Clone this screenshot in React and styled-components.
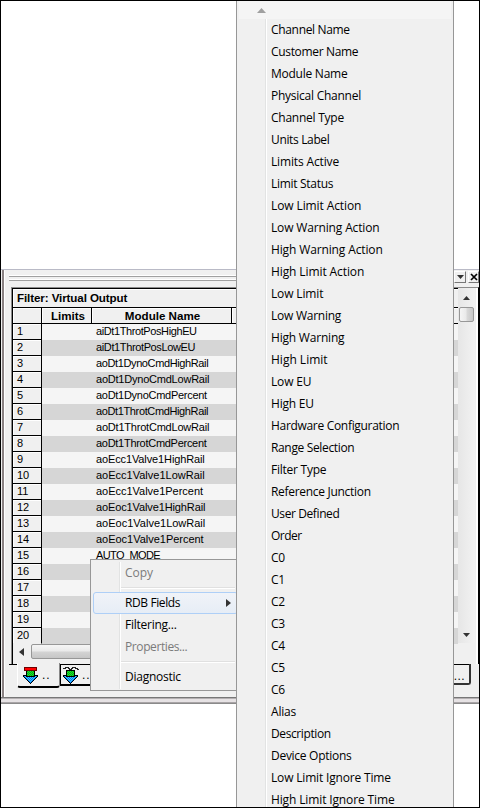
import React from "react";
import styled, { createGlobalStyle, css } from "styled-components";

const Global = createGlobalStyle`
  *{box-sizing:border-box}
  body{margin:0;background:#fff}
  svg{flex:none}
`;
const Frame = styled.div`
  position:relative;width:480px;height:808px;border:1px solid #000;background:#fff;overflow:hidden;
  padding-top:268px;font:12px/16px "Liberation Sans",Arial,sans-serif;color:#000;
`;
const Panel = styled.section`
  display:flex;height:428px;border-top:1px solid #b9bac6;background:#f0f0f0;
`;
const LeftEdge = styled.div`
  width:7px;margin-left:1px;border-left:2px solid #8a8283;box-shadow:inset 1px 0 #fff;
`;
const PanelBody = styled.div`flex:1;display:flex;flex-direction:column;`;
const TitleBar = styled.header`
  height:17px;flex:none;display:flex;justify-content:flex-end;align-items:flex-start;
`;
const Grip = styled.div`
  flex:1;height:6px;margin-top:5px;
  background:linear-gradient(#fff 0 1px,#a0a0a0 1px 2px,#f0f0f0 2px 4px,#fff 4px 5px,#a0a0a0 5px);
`;
const TitleButton = styled.button`
  width:${p => p.$width}px;height:12px;margin:1px 0 0 2px;padding:0;border:1px solid;
  border-color:#fff #777 #777 #fff;background:#f0f0f0;display:grid;place-items:center;
`;
const Well = styled.div`
  flex:none;height:377px;display:flex;margin-left:2px;border-top:1px solid #8b8b8b;border-left:1px solid #8b8b8b;border-right:1px solid #000;
`;
const Sheet = styled.div`
  width:446px;border-top:1px solid #000;border-left:1px solid #000;display:flex;flex-direction:column;
`;
const FilterTitle = styled.div`
  height:19px;flex:none;padding:1px 0 0 4px;font-size:11.6px;letter-spacing:-.1px;font-weight:bold;border-bottom:1px solid #000;box-shadow:inset 1px 1px #fff;
`;
const HeadRow = styled.div`
  display:grid;grid-template-columns:29px 50px 140px 1fr;height:16px;flex:none;border-bottom:1px solid #000;
`;
const HeadCell = styled.div`
  border-right:1px solid #000;text-align:center;font-size:11.6px;font-weight:bold;line-height:15px;box-shadow:inset 1px 1px #fff;
  padding-left:${p => p.$inset || 0}px;
  &:last-child{border-right:0}
`;
const Row = styled.div`
  display:flex;height:16px;flex:none;font-size:11px;background:${p => (p.$dark ? "#d6d6d6" : "#f5f5f5")};
`;
const RowNumber = styled.div`
  width:29px;padding-left:4px;border-right:1px solid #000;border-bottom:1px solid ${p => (p.$last ? "#f0f0f0" : "#000")};
  background:#f0f0f0;box-shadow:inset 1px 1px #fff;line-height:15px;
`;
const RowName = styled.div`padding-left:54px;line-height:15px;letter-spacing:${p => p.$track || 0}px;`;
const HScroll = styled.div`
  display:flex;height:16px;background:#f0f0f0;
`;
const ArrowCell = styled.div`
  width:17px;height:${p => p.$height || 17}px;flex:none;display:grid;place-items:center;
`;
const HThumb = styled.div`
  width:330px;height:15px;margin:0 1px;border:1px solid #979797;border-radius:2px;
  background:linear-gradient(#f5f5f5,#e9e9e9 48%,#d4d4d4 52%,#c6c6c6);
`;
const VScroll = styled.div`
  width:17px;height:355px;padding-top:1px;display:flex;flex-direction:column;align-items:center;background:linear-gradient(90deg,#e6e6e6,#f2f2f2);
`;
const VThumb = styled.div`
  width:15px;height:15px;border:1px solid #979797;border-radius:2px;margin-top:1px;
  background:linear-gradient(90deg,#f5f5f5,#e9e9e9 48%,#dadada 52%,#c6c6c6);
`;
const BottomArrow = styled(ArrowCell)`margin-top:auto;`;
const WellEdge = styled.div`flex:1;border-right:2px solid #fff;`;
const TabStrip = styled.div`
  height:33px;display:flex;align-items:flex-start;margin-right:8px;box-shadow:inset 0 1px #000,8px 0 #f0f0f0;
`;
const Tab = styled.div`
  display:flex;align-items:flex-start;gap:5px;font-weight:bold;line-height:13px;background:#f0f0f0;
  border-right:1px solid #000;border-bottom:2px solid #000;
  ${p => p.$active
    ? css`width:43px;height:25px;margin:-1px 0 0 8px;padding:3px 0 0 5px;border-right-color:#888;border-left:1px solid #fff;border-radius:0 0 3px 3px;`
    : css`width:42px;height:22px;padding:1px 0 0 2px;border-left:1px solid #000;border-top:1px solid #000;`}
`;
const TabDots = styled.span`margin:${p => p.$drop}px 0 0 -2px;font-weight:normal;letter-spacing:1px;`;
const LastTab = styled.div`
  margin-left:auto;width:40px;height:21px;border-right:2px solid #333;border-bottom:2px solid #333;
  border-radius:0 0 3px 0;padding:6px 4px 0 0;text-align:right;line-height:13px;letter-spacing:0.4px;
`;
const Splitter = styled.div`
  height:7px;border-top:1px solid #777;border-bottom:1px solid #8a8a8a;background:linear-gradient(#b4b0b2 1px,#e6e2e4 1px 4px,#a8a4a6 4px);
`;
const menuType = css`font:12px/22px "Open Sans","Noto Sans",sans-serif;`;
const ContextMenu = styled.nav`
  position:absolute;left:89px;top:558px;width:148px;height:132px;border:1px solid #979797;background:#f0f0f0;
  padding:2px;${menuType}
  background-image:linear-gradient(90deg,#e2e3e3 1px,#fff 1px);background-size:2px 127px;background-position:28px 2px;background-repeat:no-repeat;
`;
const MenuEntry = styled.div`
  height:22px;padding:0 3px 0 31px;border:1px solid transparent;border-radius:3px;line-height:20px;display:flex;justify-content:space-between;align-items:center;
  color:${p => (p.$disabled ? "#7b7b7b" : "#000")};letter-spacing:${p => p.$track || 0}px;
  ${p => p.$hover && css`border-color:#aecff7;background:linear-gradient(#f0f3f8,#e6edf6);margin-right:-3px;padding-right:6px;`}
`;
const Divider = styled.hr`margin:3px 0 3px 28px;height:2px;border:0;background:linear-gradient(#e0e0e0 1px,#fff 1px);`;
const FieldMenu = styled.nav`
  position:absolute;left:235px;top:0;width:218px;height:806px;border:solid #979797;border-width:0 1px;background:#f0f0f0;
  padding:0 2px;${menuType}
`;
const ScrollUp = styled.div`
  height:18px;background:#f5f5f5;display:flex;align-items:center;padding-left:18px;
`;
const FieldList = styled.div`border-left:1px solid #e2e3e3;margin-left:26px;box-shadow:inset 1px 0 #fff;`;
const Field = styled.div`height:22px;padding-left:5px;white-space:nowrap;letter-spacing:${p => p.$track || 0}px;`;

const Arrow = ({ dir, color = "#333" }) => {
  const d = { up: "M0 5L4.500 0L9 5z", down: "M0 0H9L4.500 5z", left: "M5 0V8L0 4z", right: "M0 0L5 4L0 8z" }[dir];
  const wide = dir === "up" || dir === "down";
  return <svg width={wide ? 9 : 5} height={wide ? 5 : 8}><path d={d} fill={color} /></svg>;
};
const SmallArrow = ({ dir }) => (
  <svg width="7" height="4"><path d={dir === "up" ? "M0 4L3.500 0L7 4z" : "M0 0H7L3.500 4z"} fill="#333" /></svg>
);
const OutputIcon = ({ wave }) => (
  <svg width="16" height="18" shapeRendering="crispEdges">
    <defs>
      <pattern id="blueDots" width="2" height="2" patternUnits="userSpaceOnUse"><path d="M0 0h2v2H0z" fill="#0078f0" /><path d="M0 0h1v1H0zM1 1h1v1H1z" fill="#40c8ff" /></pattern>
      <pattern id="greenDots" width="2" height="2" patternUnits="userSpaceOnUse"><path d="M0 0h2v2H0z" fill="#00a020" /><path d="M0 0h1v1H0zM1 1h1v1H1z" fill="#20e820" /></pattern>
    </defs>
    <path d="M0 9h15v2h-1v1h-1v1h-1v1h-1v1h-1v1h-1v1h-1v1h-1v-1h-1v-1h-1v-1h-1v-1h-1v-1h-1v-1h-1v-1h-1z" fill="#000" />
    <path d="M1 10h13v1h-1v1h-1v1h-1v1h-1v1h-1v1h-1v1h-1v-1h-1v-1h-1v-1h-1v-1h-1v-1h-1v-1h-1z" fill="url(#blueDots)" />
    <path d="M3 4h9v7h-9z" fill="#000" />
    <path d="M4 5h7v5h-7z" fill="url(#greenDots)" />
    {wave
      ? <path d="M0 2h2v-1h3v1h1v1h2v-1h1v-1h3v1h2v1h2" fill="none" stroke="#222" transform="translate(0 .5)" />
      : <path d="M1.500 1.500h12v3h-12z" fill="#ff0000" stroke="#700000" />}
  </svg>
);

const channels = [
  ["aiDt1ThrotPosHighEU", -0.4], ["aiDt1ThrotPosLowEU", -0.37], ["aoDt1DynoCmdHighRail", -0.38],
  ["aoDt1DynoCmdLowRail", -0.22], ["aoDt1DynoCmdPercent", -0.28], ["aoDt1ThrotCmdHighRail", -0.37],
  ["aoDt1ThrotCmdLowRail", -0.21], ["aoDt1ThrotCmdPercent", -0.28], ["aoEcc1Valve1HighRail", -0.12],
  ["aoEcc1Valve1LowRail", 0], ["aoEcc1Valve1Percent", -0.02], ["aoEoc1Valve1HighRail", -0.12],
  ["aoEoc1Valve1LowRail", 0], ["aoEoc1Valve1Percent", -0.02], ["AUTO_MODE", -0.6],
  [""], [""], [""], [""], [""],
];
const fields = [
  ["Channel Name", -0.33], ["Customer Name", -0.33], ["Module Name", -0.25], ["Physical Channel", -0.25],
  ["Channel Type", -0.25], ["Units Label", -0.35], ["Limits Active", -0.15], ["Limit Status", -0.3],
  ["Low Limit Action", -0.1], ["Low Warning Action", -0.15], ["High Warning Action", -0.13], ["High Limit Action", -0.1],
  ["Low Limit", -0.15], ["Low Warning", -0.25], ["High Warning", -0.2], ["High Limit", 0],
  ["Low EU", -0.15], ["High EU", -0.2], ["Hardware Configuration", -0.31], ["Range Selection", -0.35],
  ["Filter Type", -0.25], ["Reference Junction", -0.3], ["User Defined", -0.4], ["Order", -0.5],
  ["C0", -0.3], ["C1", -0.3], ["C2", -0.3], ["C3", -0.3], ["C4", -0.3], ["C5", -0.3], ["C6", -0.3],
  ["Alias", -0.2], ["Description", -0.4], ["Device Options", -0.28], ["Low Limit Ignore Time", -0.17], ["High Limit Ignore Time", -0.13],
];

export default function App() {
  return (
    <Frame>
      <Global />
      <Panel>
        <LeftEdge />
        <PanelBody>
          <TitleBar>
            <Grip />
            <TitleButton $width={12}><SmallArrow dir="down" /></TitleButton>
            <TitleButton $width={11}><svg width="8" height="8"><path d="M1 1l6 6M7 1l-6 6" stroke="#000" strokeWidth="1.700" /></svg></TitleButton>
          </TitleBar>
          <Well>
            <Sheet>
              <FilterTitle>Filter: Virtual Output</FilterTitle>
              <HeadRow>
                <HeadCell /><HeadCell $inset={3}>Limits</HeadCell><HeadCell $inset={2}>Module Name</HeadCell><HeadCell />
              </HeadRow>
              {channels.map(([name, track], i) => (
                <Row key={i} $dark={i % 2 === 1}><RowNumber $last={i === 19}>{i + 1}</RowNumber><RowName $track={track}>{name}</RowName></Row>
              ))}
              <HScroll><ArrowCell $height={15}><Arrow dir="left" /></ArrowCell><HThumb /></HScroll>
            </Sheet>
            <VScroll>
              <ArrowCell><SmallArrow dir="up" /></ArrowCell><VThumb />
              <BottomArrow><SmallArrow dir="down" /></BottomArrow>
            </VScroll>
            <WellEdge />
          </Well>
          <TabStrip>
            <Tab $active><OutputIcon /><TabDots $drop={3}>..</TabDots></Tab>
            <Tab><OutputIcon wave /><TabDots $drop={3}>..</TabDots></Tab>
            <LastTab>...</LastTab>
          </TabStrip>
        </PanelBody>
      </Panel>
      <Splitter />
      <ContextMenu>
        <MenuEntry $disabled>Copy</MenuEntry>
        <Divider />
        <MenuEntry $hover $track={-0.4}>RDB Fields<Arrow dir="right" /></MenuEntry>
        <MenuEntry $track={-0.25}>Filtering...</MenuEntry>
        <MenuEntry $disabled $track={-0.4}>Properties...</MenuEntry>
        <Divider />
        <MenuEntry $track={-0.25}>Diagnostic</MenuEntry>
      </ContextMenu>
      <FieldMenu>
        <ScrollUp><Arrow dir="up" color="#a0a0a0" /></ScrollUp>
        <FieldList>{fields.map(([name, track]) => <Field key={name} $track={track}>{name}</Field>)}</FieldList>
      </FieldMenu>
    </Frame>
  );
}
